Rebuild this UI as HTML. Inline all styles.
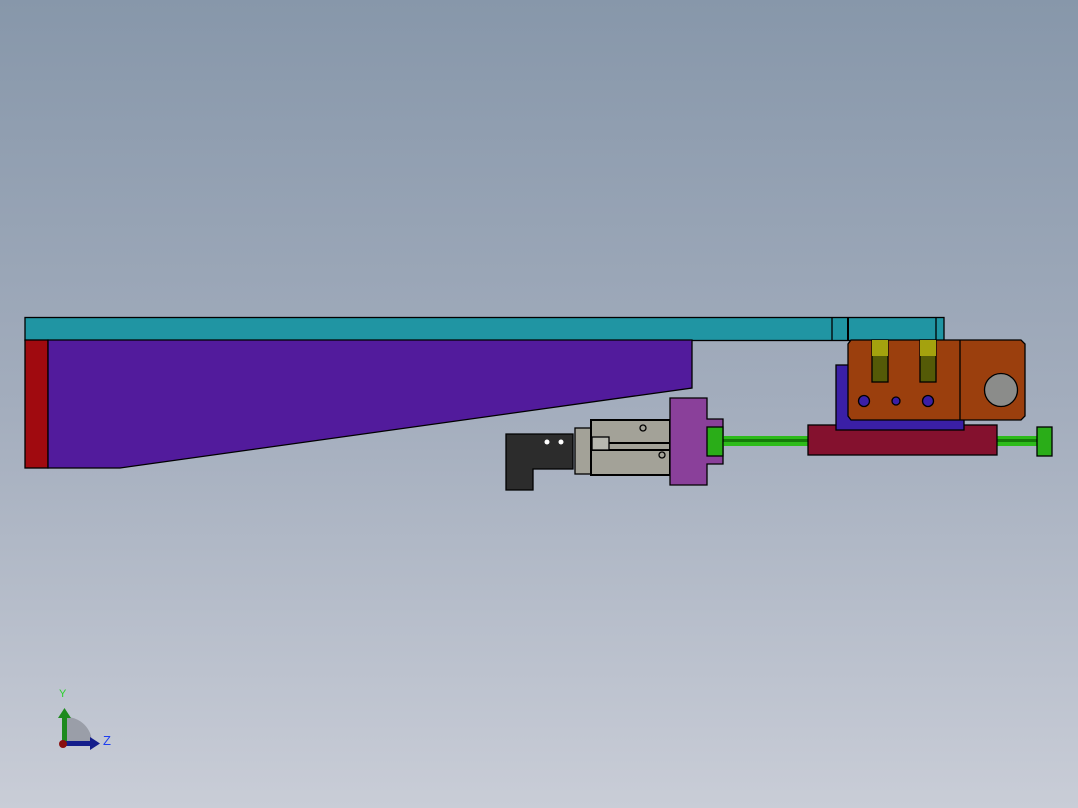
<!DOCTYPE html>
<html><head><style>
html,body{margin:0;padding:0}
body{width:1078px;height:808px;overflow:hidden;background:linear-gradient(#8797aa 0%,#a3adbd 50%,#c9cdd7 100%);}
</style></head><body>
<svg width="1078" height="808" viewBox="0 0 1078 808" style="position:absolute;left:0;top:0">
<g stroke="#000" stroke-width="1.3">
<rect x="25" y="317.5" width="919" height="23" fill="#2095a3"/>
<line x1="832" y1="318" x2="832" y2="340"/><line x1="848" y1="318" x2="848" y2="340" stroke-width="2"/>
<line x1="936" y1="318" x2="936" y2="340"/>
<rect x="25" y="340" width="23" height="128" fill="#a00a0f"/>
<polygon points="48,340 692,340 692,388 120,468 48,468" fill="#521b9c"/>
<polygon points="506,434 573,434 573,469 533,469 533,490 506,490" fill="#2c2c2c"/>
<rect x="575" y="428" width="16" height="46" fill="#a3a298"/>
<rect x="591" y="420" width="79" height="55" fill="#a3a298" stroke-width="2"/>
<line x1="591" y1="443" x2="670" y2="443" stroke-width="2"/>
<line x1="591" y1="450" x2="670" y2="450" stroke-width="2"/>
<rect x="592" y="437" width="17" height="13" fill="#b8b8b0"/>
<circle cx="643" cy="428" r="3" fill="none"/><circle cx="662" cy="455" r="3" fill="none"/>
<circle cx="547" cy="442" r="2.5" fill="#fff" stroke="none"/><circle cx="561" cy="442" r="2.5" fill="#fff" stroke="none"/>
<polygon points="670,398 707,398 707,419 723,419 723,464 707,464 707,485 670,485" fill="#8a409a"/>
<rect x="723" y="436" width="314" height="10" fill="#2dbb1a" stroke="none"/>
<rect x="723" y="439" width="314" height="3" fill="#157a0a" stroke="none"/>
<rect x="707" y="427" width="16" height="29" fill="#2aad18"/>
<rect x="1037" y="427" width="15" height="29" fill="#2aad18"/>
<rect x="808" y="425" width="189" height="30" fill="#84112e"/>
<rect x="836" y="365" width="128" height="65" fill="#3a1fa6"/>
<polygon points="851,340 1021,340 1025,344 1025,416 1021,420 851,420 848,416 848,344" fill="#9b3f0d"/>
<line x1="960" y1="340" x2="960" y2="420"/>
<rect x="872" y="340" width="16" height="42" fill="#545a07"/>
<rect x="920" y="340" width="16" height="42" fill="#545a07"/>
<rect x="872" y="340" width="16" height="16" fill="#a4a20e" stroke="none"/>
<rect x="920" y="340" width="16" height="16" fill="#a4a20e" stroke="none"/>
<circle cx="864" cy="401" r="5.5" fill="#3a1fa6"/>
<circle cx="896" cy="401" r="4" fill="#3a1fa6"/>
<circle cx="928" cy="401" r="5.5" fill="#3a1fa6"/>
<circle cx="1001" cy="390" r="16.5" fill="#8b8c8a"/>
</g>
<path d="M66 743 L66 717 A26 26 0 0 1 92 743 Z" fill="#9a9ea8"/>
<rect x="62" y="716" width="5" height="27" fill="#1d8a1d"/>
<polygon points="58,718 64.5,708 71,718" fill="#1d8a1d"/>
<rect x="64" y="741" width="28" height="5" fill="#141e8c"/>
<polygon points="90,737 100,743.5 90,750" fill="#141e8c"/>
<circle cx="63" cy="744" r="4" fill="#8a1010"/>
<text x="59" y="697" font-family="Liberation Sans, sans-serif" font-size="11" fill="#2ad22a">Y</text>
<text x="103" y="745" font-family="Liberation Sans, sans-serif" font-size="13" fill="#1e3ef0">Z</text>
</svg>
</body></html>
